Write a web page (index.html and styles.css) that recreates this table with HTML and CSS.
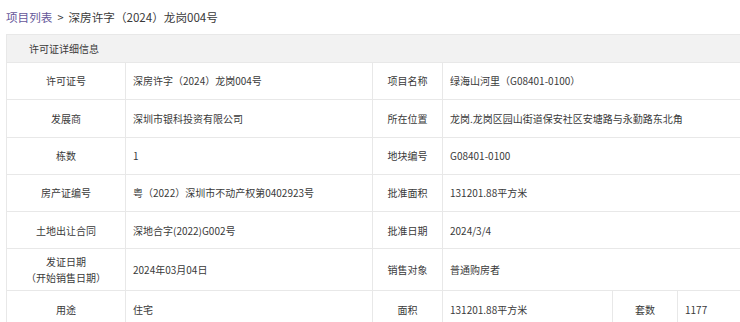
FILE: index.html
```html
<!DOCTYPE html>
<html lang="zh-CN">
<head>
<meta charset="utf-8">
<title>许可证详细信息</title>
<link rel="stylesheet" href="styles.css">
</head>
<body>
<div class="crumb"><a class="crumb-link" href="#">项目列表</a><span class="crumb-sep">&gt;</span><span class="crumb-cur">深房许字（2024）龙岗004号</span></div>
<table class="info">
  <colgroup>
    <col class="c1"><col class="c2"><col class="c3"><col class="c4"><col class="c5"><col class="c6">
  </colgroup>
  <thead>
    <tr><th class="head" colspan="6">许可证详细信息</th></tr>
  </thead>
  <tbody>
    <tr><td class="lbl">许可证号</td><td class="val">深房许字（2024）龙岗004号</td><td class="lbl">项目名称</td><td class="val" colspan="3">绿海山河里（G08401-0100）</td></tr>
    <tr><td class="lbl">发展商</td><td class="val">深圳市银科投资有限公司</td><td class="lbl">所在位置</td><td class="val" colspan="3">龙岗.龙岗区园山街道保安社区安塘路与永勤路东北角</td></tr>
    <tr><td class="lbl">栋数</td><td class="val">1</td><td class="lbl">地块编号</td><td class="val" colspan="3">G08401-0100</td></tr>
    <tr><td class="lbl">房产证编号</td><td class="val">粤（2022）深圳市不动产权第0402923号</td><td class="lbl">批准面积</td><td class="val" colspan="3">131201.88平方米</td></tr>
    <tr><td class="lbl">土地出让合同</td><td class="val">深地合字(2022)G002号</td><td class="lbl">批准日期</td><td class="val" colspan="3">2024/3/4</td></tr>
    <tr><td class="lbl">发证日期<br>（开始销售日期）</td><td class="val">2024年03月04日</td><td class="lbl">销售对象</td><td class="val" colspan="3">普通购房者</td></tr>
    <tr><td class="lbl">用途</td><td class="val">住宅</td><td class="lbl">面积</td><td class="val">131201.88平方米</td><td class="lbl">套数</td><td class="val">1177</td></tr>
  </tbody>
</table>
</body>
</html>
```

FILE: styles.css
```css
html, body {
  margin: 0;
  padding: 0;
  overflow: hidden;
  background: #fff;
}
body {
  font-family: "Microsoft YaHei", "Noto Sans CJK SC", "Noto Sans", sans-serif;
  color: #3a3a3a;
  width: 740px;
}
.crumb {
  padding: 8px 0 0 6px;
  height: 26px;
  box-sizing: border-box;
  font-size: 11.6px;
  line-height: 18px;
  white-space: nowrap;
}
.crumb-link {
  color: #66579a;
  text-decoration: none;
}
.crumb-sep {
  margin: 0 5px;
  font-size: 11px;
  color: #3a3a3a;
}
.crumb-cur {
  color: #3a3a3a;
}
.info {
  margin-left: 6px;
  margin-top: 8px;
  border-collapse: collapse;
  table-layout: fixed;
  width: 760px;
  font-size: 10px;
}
.c1 { width: 119px; }
.c2 { width: 247px; }
.c3 { width: 70px; }
.c4 { width: 170px; }
.c5 { width: 65px; }
.c6 { width: auto; }
.info th, .info td {
  border: 1px solid #e8e8e8;
}
.head {
  background: #f2f2f2;
  text-align: left;
  font-weight: normal;
  height: 28px;
  padding: 0 0 0 22px;
  line-height: 16px;
  box-sizing: border-box;
}
.info td {
  height: 26.3px;
  padding: 5px 7px;
  line-height: 15.5px;
  white-space: nowrap;
}
.lbl {
  text-align: center;
}
.val {
  text-align: left;
}
```
